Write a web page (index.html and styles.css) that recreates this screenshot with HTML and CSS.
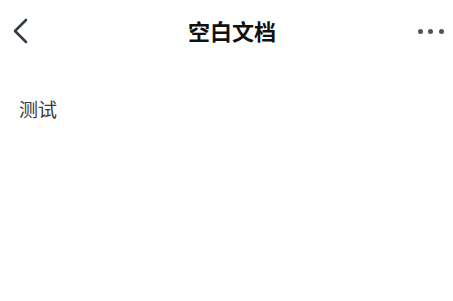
FILE: index.html
```html
<!DOCTYPE html>
<html lang="zh-CN">
<head>
    <meta charset="UTF-8">
    <meta name="viewport" content="width=device-width, initial-scale=1.0">
    <title>空白文档</title>
    <link rel="stylesheet" href="styles.css">
</head>
<body>
    <header class="nav-bar">
        <button class="nav-btn back-btn" type="button" aria-label="返回">
            <svg width="16" height="26" viewBox="0 0 16 26">
                <path d="M14 2 L3 13 L14 24" fill="none" stroke="#333c47" stroke-width="2.6" stroke-linecap="round" stroke-linejoin="round"/>
            </svg>
        </button>
        <h1 class="nav-title">空白文档</h1>
        <button class="nav-btn more-btn" type="button" aria-label="更多">
            <span class="dot"></span><span class="dot"></span><span class="dot"></span>
        </button>
    </header>

    <main class="doc">
        <p class="doc-text">测试</p>
    </main>
</body>
</html>
```

FILE: styles.css
```css
body {
    margin: 0;
    padding: 0;
    background-color: #ffffff;
    font-family: "Noto Sans CJK SC", "Noto Sans", sans-serif;
    color: #222222;
}

.nav-bar {
    height: 62px;
    display: flex;
    align-items: center;
    justify-content: space-between;
    padding: 0 9px 0 12px;
    box-sizing: border-box;
}

.nav-btn {
    background: none;
    border: none;
    padding: 0;
    cursor: pointer;
    display: flex;
    align-items: center;
}

.back-btn {
    width: 60px;
    height: 30px;
}

.nav-title {
    margin: 0 0 2px 0;
    font-size: 22px;
    font-weight: 700;
    color: #111111;
    line-height: 30px;
    padding-left: 8px;
}

.more-btn {
    width: 60px;
    height: 30px;
    justify-content: flex-end;
    gap: 5.5px;
}

.dot {
    width: 5px;
    height: 5px;
    border-radius: 50%;
    background-color: #4b5562;
}

.doc {
    padding: 0 19px;
}

.doc-text {
    margin: 35px 0 0 0;
    font-size: 19px;
    line-height: 24px;
    color: #3a3a3a;
}
```
